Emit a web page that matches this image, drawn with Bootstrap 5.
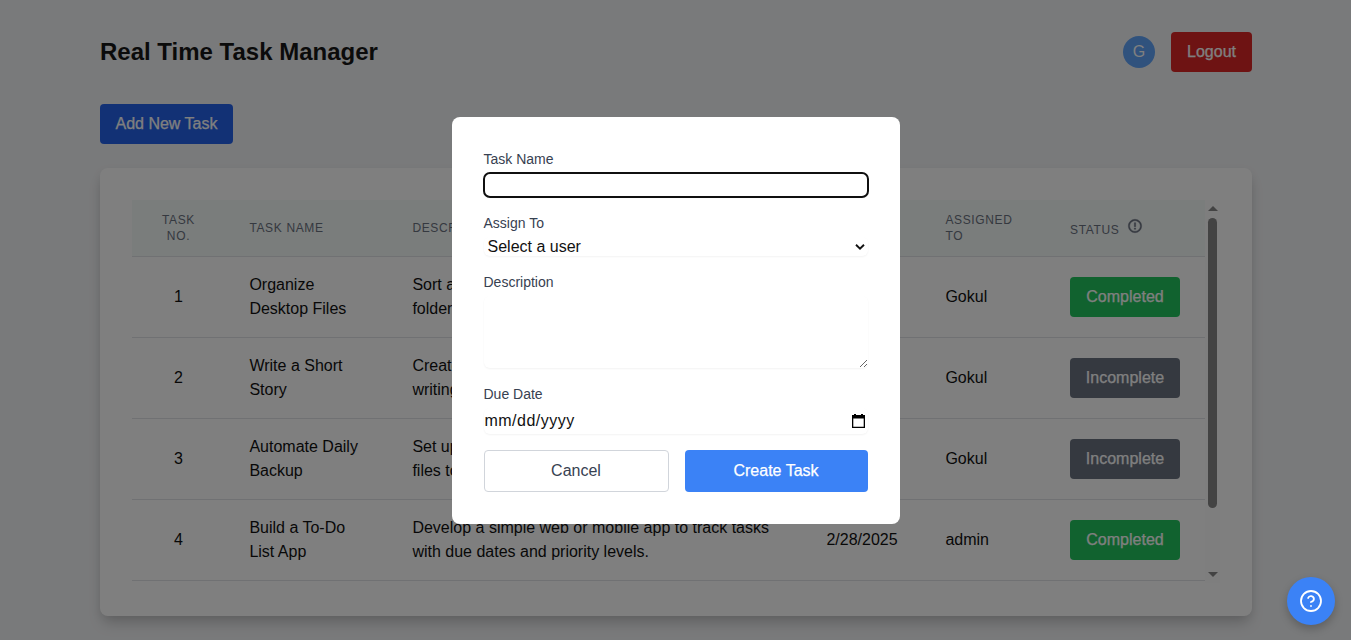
<!DOCTYPE html>
<html lang="en">
<head>
<meta charset="utf-8">
<meta name="viewport" content="width=device-width, initial-scale=1">
<title>Real Time Task Manager</title>
<link href="https://cdn.jsdelivr.net/npm/bootstrap@5.3.0/dist/css/bootstrap.min.css" rel="stylesheet">
<style>
  body { font-family: "Liberation Sans", Arial, sans-serif; font-size: 16px; line-height: 24px; color: #111; background: #f3f4f6; height: 640px; overflow: hidden; }
  .page-wrap { width: 1152px; margin-left: 100px; padding-top: 32px; }
  .app-title { font-size: 24px; line-height: 32px; font-weight: 700; color: #171717; }
  .btn { --bs-btn-font-size: 16px; --bs-btn-line-height: 24px; --bs-btn-border-radius: 4px; --bs-btn-border-width: 0; height: 40px; padding: 8px 15px; color: #fff; -webkit-text-stroke: .25px currentColor; }
  .btn-logout { background: #dc2626; width: 81px; }
  .btn-add { background: #2563eb; width: 133px; white-space: nowrap; }
  .btn-done { background: #22c55e; width: 110px; }
  .btn-open { background: #6b7280; width: 110px; }
  .avatar { width: 32px; height: 32px; background: #60a5fa; color: #fff; }
  .panel { height: 448px; padding: 32px; border-radius: 8px; background: #fff; box-shadow: 0 10px 15px -3px rgba(0,0,0,.15), 0 4px 12px -2px rgba(0,0,0,.12); }
  .scroll-area { height: 383px; overflow: hidden; }
  .tasks { table-layout: fixed; width: 1073px; margin: 0; border-collapse: separate; border-spacing: 0; }
  .tasks th { background: #f5faf9; height: 57px; padding: 0 24px; vertical-align: middle; font-size: 12px; line-height: 16px; font-weight: 400; letter-spacing: .64px; color: #6b7280; border-bottom: 1px solid #e0e3e6; }
  .tasks td { height: 81px; padding: 0 24px; vertical-align: middle; border-bottom: 1px solid #e0e3e6; }
  .tasks th + th, .tasks td + td { padding-left: 24.4px; padding-right: 23px; }
  .tasks th:last-child, .tasks td:last-child { padding-left: 24px; }
  .scroll-track { width: 15px; background: #fcfcfc; padding: 6px 0; }
  .scroll-thumb { width: 9px; height: 290px; margin-top: 7px; border-radius: 5px; background: #868686; }
  .tri { width: 0; border: 5px solid transparent; }
  .tri-up { border-top: 0; border-bottom-color: #868686; }
  .tri-down { border-bottom: 0; border-top-color: #868686; }
  .shade { background: rgba(0,0,0,.5); z-index: 10; }
  .dialog-box { width: 448px; height: 407px; padding: 32px; border-radius: 8px; background: #fff; margin-top: 1px; }
  .field-label { display: block; font-size: 14px; line-height: 20px; color: #374151; margin-bottom: 4px; }
  .field { display: block; width: 100%; border: 0; border-radius: 6px; background: #fff; color: #111; padding: 0; margin-bottom: 16px; box-shadow: 0 1px 2px rgba(0,0,0,.05); }
  .field-name { height: 24px; outline: 2px solid #101010; outline-offset: -1px; }
  .field-pick { height: 19px; line-height: 19px; padding-right: 3px; }
  .field-date { height: 26px; line-height: 26px; padding: 0 3px 0 1px; }
  .date-hint { letter-spacing: .48px; }
  .btn-cancel { height: 42px; width: 185px; border: 1px solid #d1d5db; color: #374151; -webkit-text-stroke: 0; }
  .btn-create { height: 42px; width: 183px; background: #3b82f6; }
  .help-btn { width: 48px; height: 48px; right: 16px; bottom: 15px; z-index: 20; background: #3b82f6; box-shadow: 0 4px 8px rgba(0,0,0,.22); }
</style>
<script src="https://cdn.jsdelivr.net/npm/bootstrap@5.3.0/dist/js/bootstrap.bundle.min.js"></script>
</head>
<body>
<div class="page-wrap">
  <header class="d-flex align-items-center justify-content-between mb-4 pb-2">
    <h1 class="app-title m-0">Real Time Task Manager</h1>
    <div class="d-flex align-items-center gap-3">
      <span class="avatar rounded-circle d-flex align-items-center justify-content-center">G</span>
      <button class="btn btn-logout">Logout</button>
    </div>
  </header>
  <button class="btn btn-add d-block mb-4">Add New Task</button>
  <main class="panel">
    <div class="scroll-area d-flex">
      <table class="tasks align-self-start">
        <colgroup><col style="width:93px"><col style="width:163px"><col style="width:414px"><col style="width:119px"><col style="width:125px"><col style="width:159px"></colgroup>
        <thead>
          <tr>
            <th class="text-center">TASK NO.</th><th>TASK NAME</th><th>DESCRIPTION</th><th>DUE DATE</th><th>ASSIGNED TO</th>
            <th><span class="d-flex"><span class="pt-1">STATUS</span>
              <svg class="ms-2" width="16" height="16" viewBox="0 0 24 24" fill="#6b7280" stroke="#6b7280" stroke-width=".6"><path d="M11 15h2v2h-2zm0-8h2v6h-2zm.99-5C6.47 2 2 6.48 2 12s4.47 10 9.99 10C17.52 22 22 17.52 22 12S17.52 2 11.99 2zM12 20c-4.42 0-8-3.58-8-8s3.58-8 8-8 8 3.58 8 8-3.58 8-8 8z"/></svg></span></th>
          </tr>
        </thead>
        <tbody>
          <tr><td class="text-center">1</td><td>Organize Desktop Files</td><td>Sort and organize files into clearly named<br>folders.</td><td>2/25/2025</td><td>Gokul</td><td><button class="btn btn-done">Completed</button></td></tr>
          <tr><td class="text-center">2</td><td>Write a Short Story</td><td>Create a short story to practice creative<br>writing.</td><td>2/26/2025</td><td>Gokul</td><td><button class="btn btn-open">Incomplete</button></td></tr>
          <tr><td class="text-center">3</td><td>Automate Daily Backup</td><td>Set up a script to back up important<br>files to the cloud.</td><td>2/27/2025</td><td>Gokul</td><td><button class="btn btn-open">Incomplete</button></td></tr>
          <tr><td class="text-center">4</td><td>Build a To-Do List App</td><td>Develop a simple web or mobile app to track tasks with due dates and priority levels.</td><td>2/28/2025</td><td>admin</td><td><button class="btn btn-done">Completed</button></td></tr>
        </tbody>
      </table>
      <div class="scroll-track d-flex flex-column align-items-center">
        <span class="tri tri-up"></span>
        <span class="scroll-thumb mb-auto"></span>
        <span class="tri tri-down"></span>
      </div>
    </div>
  </main>
</div>

<div class="shade position-fixed top-0 start-0 w-100 h-100 d-flex align-items-center justify-content-center">
  <form class="dialog-box">
    <label class="field-label" for="taskName">Task Name</label>
    <input class="field field-name" id="taskName" type="text">
    <span class="field-label">Assign To</span>
    <div class="field field-pick d-flex align-items-center justify-content-between ps-1">
      <span>Select a user</span>
      <svg width="10" height="6" viewBox="0 0 10 6" fill="none" stroke="#111" stroke-width="1.9"><path d="M1 .8 5 4.6 9 .8"/></svg>
    </div>
    <label class="field-label" for="desc">Description</label>
    <textarea class="field" id="desc" rows="3"></textarea>
    <span class="field-label">Due Date</span>
    <div class="field field-date d-flex align-items-center justify-content-between">
      <span class="date-hint">mm/dd/yyyy</span>
      <svg width="13" height="14" viewBox="0 0 13 14"><path d="M0 1h2V0h2v1h5V0h2v1h2v13H0zM1.3 4.5v8.2h10.4V4.5z" fill="#000" fill-rule="evenodd"/></svg>
    </div>
    <div class="d-flex gap-3">
      <button type="button" class="btn btn-cancel">Cancel</button>
      <button type="button" class="btn btn-create">Create Task</button>
    </div>
  </form>
</div>

<button class="help-btn btn rounded-circle position-fixed d-flex align-items-center justify-content-center p-0" aria-label="Help">
  <svg width="24" height="24" viewBox="0 0 24 24" fill="none" stroke="#fff" stroke-width="1.8" stroke-linecap="round" stroke-linejoin="round"><circle cx="12" cy="12" r="10"/><path d="M9.1 9a3 3 0 0 1 5.8 1c0 2-3 3-3 3M12 17h.01"/></svg>
</button>
</body>
</html>
